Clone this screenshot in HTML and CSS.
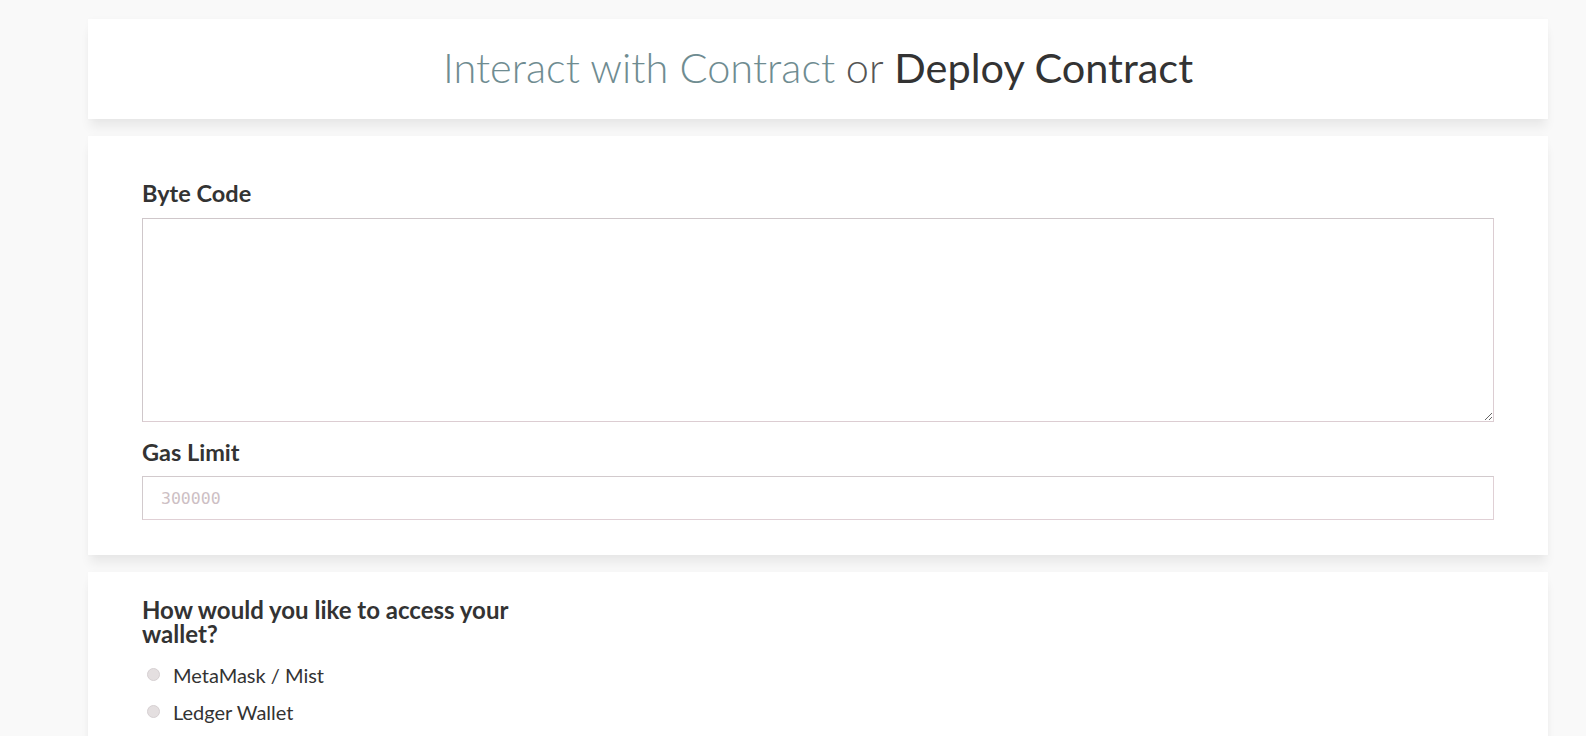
FILE: index.html
```html
<!DOCTYPE html>
<html>
<head>
<meta charset="utf-8">
<link rel="stylesheet" href="styles.css">
</head>
<body>
<div class="page">
  <section class="card card-title">
    <h1 class="title"><span class="t-light">Interact with Contract</span> <span class="t-or">or</span> <span class="t-strong">Deploy Contract</span></h1>
  </section>
  <section class="card card-form">
    <label class="label">Byte Code</label>
    <textarea class="bytecode"></textarea>
    <label class="label label-gas">Gas Limit</label>
    <input class="gas" type="text" placeholder="300000">
  </section>
  <section class="card card-wallet">
    <h2 class="question">How would you like to access your wallet?</h2>
    <div class="radio"><span class="dot"></span><span class="radio-text">MetaMask / Mist</span></div>
    <div class="radio"><span class="dot"></span><span class="radio-text">Ledger Wallet</span></div>
  </section>
</div>
</body>
</html>
```

FILE: styles.css
```css
html, body {
  margin: 0;
  padding: 0;
  background: #f9f9f9;
  font-family: Lato, "Open Sans", sans-serif;
  color: #333;
  overflow: hidden;
  height: 736px;
}
.page {
  padding-top: 19px;
  padding-left: 88px;
  width: 1460px;
}
.card {
  background: #fff;
  box-shadow: 0 10px 10px -2px rgba(0,0,0,0.065), 0 0 6px rgba(0,0,0,0.02);
  margin-bottom: 17px;
  box-sizing: border-box;
}
.card-title {
  height: 100px;
  padding-top: 28px;
  text-align: center;
}
.title {
  margin: 0;
  font-size: 41.5px;
  line-height: 41px;
  font-weight: 400;
}
.t-light {
  font-weight: 300;
  color: #6f8c91;
}
.t-or {
  font-weight: 300;
  color: #555;
}
.t-strong {
  font-weight: 400;
  color: #333;
}
.card-form {
  height: 419px;
  padding: 43px 54px 35px;
  display: flex;
  flex-direction: column;
}
.label {
  display: block;
  font-size: 23.5px;
  line-height: 28px;
  font-weight: 700;
  color: #333;
}
.bytecode {
  display: block;
  margin-top: 11px;
  width: 100%;
  height: 204px;
  box-sizing: border-box;
  border: 1px solid #dccdd2;
  border-top-color: #cfc7ca;
  border-left-color: #cfc7ca;
  resize: vertical;
  outline: none;
}
.label-gas {
  margin-top: 16px;
}
.gas {
  display: block;
  margin-top: 10px;
  width: 100%;
  height: 44px;
  box-sizing: border-box;
  border: 1px solid #e0d0d5;
  border-top-color: #d2cacd;
  border-left-color: #d2cacd;
  padding: 0 18px;
  font-family: "DejaVu Sans Mono", monospace;
  font-size: 16.5px;
  outline: none;
}
.gas::placeholder {
  color: #cdbfc4;
}
.card-wallet {
  height: 200px;
  padding: 26px 54px 0;
}
.question {
  margin: 0;
  max-width: 400px;
  font-size: 24px;
  line-height: 24px;
  font-weight: 700;
  color: #333;
}
.radio {
  display: flex;
  align-items: center;
  height: 37px;
  font-size: 20px;
}
.radio:first-of-type {
  margin-top: 10px;
}
.dot {
  width: 11px;
  height: 11px;
  margin-left: 5px;
  margin-right: 13px;
  border-radius: 50%;
  background: #e4dfe0;
  border: 1px solid #d6d0d2;
  flex: none;
}
.radio-text {
  color: #333;
}
```
